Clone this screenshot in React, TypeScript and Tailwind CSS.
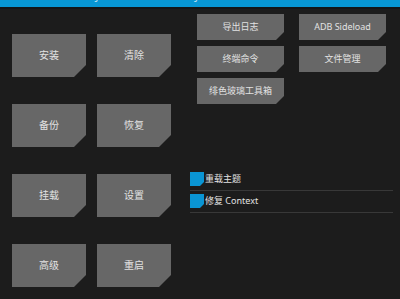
import React from 'react';

const font = { fontFamily: '"Noto Sans", "Noto Sans CJK SC", sans-serif' };

const cut =
  '[clip-path:polygon(0_0,100%_0,100%_calc(100%_-_12px),calc(100%_-_12px)_100%,0_100%)]';
const cutSmall =
  '[clip-path:polygon(0_0,100%_0,100%_calc(100%_-_8px),calc(100%_-_8px)_100%,0_100%)]';
const cutBox =
  '[clip-path:polygon(0_0,100%_0,100%_calc(100%_-_4px),calc(100%_-_4px)_100%,0_100%)]';

const mainButtons = ['安装', '清除', '备份', '恢复', '挂载', '设置', '高级', '重启'];
const toolButtons = ['导出日志', 'ADB Sideload', '终端命令', '文件管理', '绯色玻璃工具箱'];
const toggles = ['重载主题', '修复 Context'];

export default function App() {
  return (
    <div className="w-[400px] h-[299px] bg-[#1c1c1c] overflow-hidden text-[#e2e2e2]" style={font}>
      {/* header, mostly scrolled off the top */}
      <div className="h-[9px] bg-[#0797d6] overflow-hidden border-b-2 border-[#121619]">
        <div className="flex -mt-[11px] text-[11px] leading-[14px] text-white/70">
          <span className="ml-[32px]">. . .</span>
          <span className="ml-[28px]">i</span>
          <span className="ml-[18px]">Ja .. u</span>
          <span className="ml-[72px]">J</span>
        </div>
      </div>

      <div className="flex">
        {/* main menu */}
        <div className="grid grid-cols-[74px_74px] gap-x-[11px] gap-y-[27px] pl-[12px] pt-[25px]">
          {mainButtons.map((label) => (
            <button
              key={label}
              className={`h-[43px] bg-[#676767] text-[10px] flex items-center justify-center ${cut}`}
            >
              {label}
            </button>
          ))}
        </div>

        {/* advanced tools */}
        <div className="ml-[19px] w-[203px] pt-[5px]">
          <div className="ml-[7px] grid grid-cols-[87px_87px] gap-x-[15px] gap-y-[6px]">
            {toolButtons.map((label) => (
              <button
                key={label}
                className={`h-[26px] bg-[#676767] text-[9px] flex items-center justify-center ${cutSmall}`}
              >
                {label}
              </button>
            ))}
          </div>

          <div className="mt-[68px] flex flex-col gap-[3px]">
            {toggles.map((label) => (
              <div key={label}>
                <div className="h-[18px] flex items-start">
                  <span className={`w-[14px] h-[14px] bg-[#0a95d4] shrink-0 ${cutBox}`} />
                  <span className="ml-[1px] text-[9px] leading-[14px]">{label}</span>
                </div>
                <div className="h-px bg-[#383838]" />
              </div>
            ))}
          </div>
        </div>
      </div>
    </div>
  );
}
